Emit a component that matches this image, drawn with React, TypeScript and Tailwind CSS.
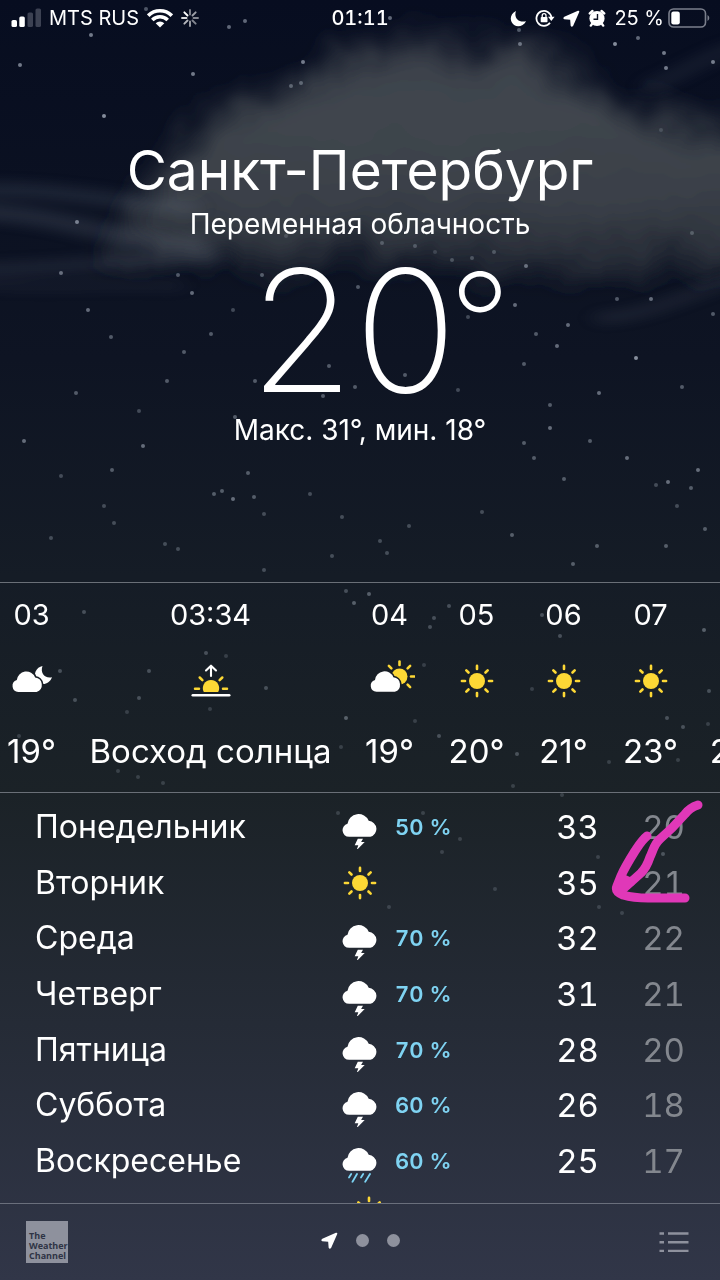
import { ReactNode } from "react";

type HourProps = {
  time: string;
  label: string;
  icon: ReactNode;
  wide?: boolean;
};

type DayProps = {
  name: string;
  icon: ReactNode;
  chance?: string;
  max: string;
  min: string;
};

const YELLOW = "#fdd835";

// x, y, opacity
const stars: [number, number, number][] = [
  [91, 35, 0.6], [20, 65, 0.6], [193, 74, 0.6], [104, 116, 0.7], [303, 62, 0.6], [301, 83, 0.4],
  [291, 86, 0.4], [245, 21, 0.5], [229, 27, 0.5], [146, 9, 0.4], [390, 18, 0.5], [519, 30, 0.4],
  [520, 44, 0.5], [615, 44, 0.7], [638, 38, 0.5], [664, 53, 0.6], [666, 68, 0.6], [713, 62, 0.6],
  [661, 130, 0.2], [692, 233, 0.3], [77, 222, 0.6], [61, 273, 0.5], [178, 275, 0.4], [192, 293, 0.5],
  [262, 275, 0.4], [88, 310, 0.5], [233, 310, 0.3], [111, 337, 0.4], [211, 334, 0.4], [184, 352, 0.4],
  [167, 381, 0.4], [76, 393, 0.4], [255, 381, 0.4], [329, 366, 0.4], [355, 387, 0.4], [323, 396, 0.4],
  [405, 375, 0.4], [458, 390, 0.3], [139, 411, 0.3], [24, 441, 0.5], [143, 446, 0.5], [235, 417, 0.4],
  [112, 470, 0.4], [61, 476, 0.3], [248, 473, 0.4], [214, 494, 0.4], [222, 491, 0.4], [233, 499, 0.5],
  [254, 497, 0.4], [310, 494, 0.3], [104, 506, 0.3], [114, 523, 0.3], [51, 538, 0.3], [165, 544, 0.3],
  [178, 549, 0.3], [264, 514, 0.3], [342, 517, 0.3], [380, 541, 0.3], [387, 553, 0.3], [332, 556, 0.3],
  [409, 526, 0.3], [482, 512, 0.3], [512, 535, 0.4], [597, 546, 0.4], [666, 546, 0.4], [573, 564, 0.4],
  [705, 529, 0.4], [677, 506, 0.3], [691, 488, 0.4], [668, 482, 0.5], [656, 485, 0.3], [698, 470, 0.5],
  [564, 479, 0.4], [534, 458, 0.4], [524, 443, 0.4], [590, 441, 0.4], [627, 458, 0.5], [550, 428, 0.5],
  [550, 405, 0.4], [599, 393, 0.5], [682, 387, 0.4], [524, 364, 0.4], [636, 358, 0.7], [557, 346, 0.5],
  [536, 334, 0.4], [568, 325, 0.5], [515, 305, 0.5], [468, 317, 0.3], [617, 299, 0.4], [651, 299, 0.5],
  [713, 314, 0.4], [526, 266, 0.5], [494, 252, 0.3], [472, 258, 0.3], [452, 260, 0.3], [435, 252, 0.2],
  [415, 246, 0.3], [382, 243, 0.3], [358, 287, 0.4], [286, 236, 0.2], [264, 570, 0.3], [84, 612, 0.3],
  [346, 591, 0.3], [354, 603, 0.4], [369, 594, 0.4], [449, 606, 0.3], [434, 618, 0.3], [430, 627, 0.3],
  [542, 615, 0.3], [560, 636, 0.3], [704, 630, 0.4], [60, 671, 0.3], [149, 671, 0.3], [206, 653, 0.3],
  [226, 656, 0.2], [266, 688, 0.3], [139, 698, 0.3], [75, 700, 0.3], [127, 712, 0.2], [210, 709, 0.2],
  [346, 718, 0.4], [424, 665, 0.2], [532, 689, 0.2], [709, 691, 0.3], [439, 736, 0.3], [415, 721, 0.2],
  [667, 718, 0.3], [683, 727, 0.3], [708, 724, 0.2], [517, 754, 0.3], [609, 762, 0.2], [678, 760, 0.2],
  [341, 747, 0.2], [118, 771, 0.2], [138, 777, 0.2], [163, 783, 0.2], [19, 736, 0.2], [513, 786, 0.2],
  [338, 813, 0.2], [423, 813, 0.2], [460, 839, 0.2], [442, 852, 0.2], [495, 889, 0.2], [389, 907, 0.2],
  [562, 795, 0.2], [598, 857, 0.2], [663, 854, 0.3], [599, 907, 0.2], [622, 913, 0.2],
];

function Sky() {
  return (
    <svg
      aria-hidden="true"
      viewBox="0 0 720 1280"
      preserveAspectRatio="xMidYMin slice"
      className="absolute inset-0 -z-10 h-full w-full"
    >
      <defs>
        <filter id="soft" x="-30%" y="-40%" width="160%" height="180%">
          <feGaussianBlur stdDeviation="15" result="blurred" />
          <feTurbulence type="fractalNoise" baseFrequency="0.016" numOctaves="3" seed="7" result="noise" />
          <feDisplacementMap in="blurred" in2="noise" scale="44" xChannelSelector="R" yChannelSelector="G" />
          <feGaussianBlur stdDeviation="3" />
        </filter>
        <filter id="wisp" x="-30%" y="-80%" width="160%" height="260%">
          <feGaussianBlur stdDeviation="10 6" />
        </filter>
        <linearGradient id="cloud" x1="0" y1="0" x2="0" y2="1">
          <stop offset="0" stopColor="#3b414b" />
          <stop offset="0.3" stopColor="#40464e" />
          <stop offset="0.7" stopColor="#3a4048" />
          <stop offset="1" stopColor="#252a35" />
        </linearGradient>
      </defs>

      <path
        d="M100 244 C140 212 150 180 185 145 C225 105 290 92 335 66 C370 44 410 42 450 50 C510 42 545 54 580 78 C605 98 612 110 650 118 C690 122 740 132 790 150 L780 244 C700 266 640 270 560 270 C480 272 430 256 360 258 C280 260 190 276 100 244 Z"
        fill="url(#cloud)"
        filter="url(#soft)"
      />
      <g filter="url(#wisp)" fill="none" stroke="#8a93a8" strokeLinecap="round">
        <path d="M-20 190 C50 188 100 200 190 208" strokeWidth="16" opacity="0.14" />
        <path d="M-20 212 C60 214 100 238 200 246" strokeWidth="18" opacity="0.17" />
        <path d="M-20 270 C60 268 110 262 220 256" strokeWidth="14" opacity="0.12" />
        <path d="M-20 284 C50 290 110 282 180 286" strokeWidth="10" opacity="0.07" />
        <path d="M600 318 C650 316 680 296 740 278" strokeWidth="10" opacity="0.13" />
        <path d="M650 86 C680 76 700 58 740 46" strokeWidth="14" opacity="0.1" />
      </g>

      {stars.map(([x, y, o]) => (
        <circle key={`${x}-${y}`} cx={x} cy={y} r="2" fill="#b9c2d0" opacity={o} />
      ))}
    </svg>
  );
}

/* Weather icons */

function CloudShape() {
  return (
    <path d="M6.7 23 A6.7 6.7 0 0 1 5 9.9 A10.6 10.6 0 0 1 25.4 7 A8.2 8.2 0 0 1 27 23 Z" />
  );
}

function SunIcon() {
  return (
    <svg viewBox="0 0 34 34" className="size-[34px]" aria-hidden="true">
      <circle cx="17" cy="17" r="8" fill={YELLOW} />
      {[0, 45, 90, 135, 180, 225, 270, 315].map((a) => (
        <path
          key={a}
          d="M17 1.9V5"
          stroke={YELLOW}
          strokeWidth="2.6"
          strokeLinecap="round"
          transform={`rotate(${a} 17 17)`}
        />
      ))}
    </svg>
  );
}

function CloudMoonIcon() {
  return (
    <svg viewBox="0 0 42 42" className="size-[42px]" aria-hidden="true">
      <path
        d="M31.5 6 C29 13 33.5 18.6 41 17.2 C39 22.5 34 25 30 23.6 C24.5 21.5 23 15.5 24.6 11.5 C26 8.5 28.5 6.6 31.5 6 Z"
        fill="#fff"
      />
      <g transform="translate(1.3 11.2) scale(0.9)" fill="#fff" stroke="#191f26" strokeWidth="3.6" style={{ paintOrder: "stroke" }}>
        <CloudShape />
      </g>
    </svg>
  );
}

function CloudSunIcon() {
  return (
    <svg viewBox="0 0 50 42" className="h-[42px] w-[50px]" aria-hidden="true">
      <circle cx="34.5" cy="16.5" r="8" fill={YELLOW} />
      {[-45, 0, 45, 90, 135].map((a) => (
        <path
          key={a}
          d="M34.5 1.5V5"
          stroke={YELLOW}
          strokeWidth="2.6"
          strokeLinecap="round"
          transform={`rotate(${a} 34.5 16.5)`}
        />
      ))}
      <g transform="translate(5.5 11) scale(0.9)" fill="#fff" stroke="#191f26" strokeWidth="3.6" style={{ paintOrder: "stroke" }}>
        <CloudShape />
      </g>
    </svg>
  );
}

function SunriseIcon() {
  return (
    <svg viewBox="0 0 40 36" className="h-9 w-10" aria-hidden="true">
      <path d="M12.8 29 A8.2 8.2 0 1 1 27.2 29 Z" fill={YELLOW} />
      <path
        d="M4 25.7H8M32 25.7H36M8.7 14.5L11.4 17.2M31.3 14.5L28.6 17.2"
        stroke={YELLOW}
        strokeWidth="2.5"
        strokeLinecap="round"
      />
      <g stroke="#fff" fill="none" strokeLinecap="round" strokeLinejoin="round">
        <path d="M1.8 32.2H38.2" strokeWidth="2.6" />
        <path d="M20 13V3M15 7.5L20 2.7L25 7.5" strokeWidth="2.1" />
      </g>
    </svg>
  );
}

function StormIcon() {
  return (
    <svg viewBox="0 0 36 44" className="h-11 w-9" aria-hidden="true">
      <g fill="#fff" transform="translate(0.3 8.8)">
        <g transform="scale(1.04 1)">
          <CloudShape />
        </g>
        <path d="M15.5 25H20.7L18.8 28.2H22.4L14.3 36.4L16 31.4H12.4Z" />
      </g>
    </svg>
  );
}

function RainIcon() {
  return (
    <svg viewBox="0 0 36 44" className="h-11 w-9" aria-hidden="true">
      <g fill="#fff" transform="translate(0.3 8.8) scale(1.04 1)">
        <CloudShape />
      </g>
      <path
        d="M9.2 35L7 38.5M15 35L10.5 42.8M21.2 35L19 38.5M28 35L23.2 42.8"
        stroke="#7cd4f4"
        strokeWidth="1.8"
        strokeLinecap="round"
      />
    </svg>
  );
}

function ArrowIcon() {
  return (
    <svg viewBox="0 0 18 18" className="size-[17px]" aria-hidden="true">
      <path
        d="M15.8 0.8 L1.4 7.2 Q-0.6 8.7 1.3 9.9 L7.6 10.4 L8.1 16.7 Q9.3 18.6 10.8 16.6 L17.2 2.2 Q17.6 0.4 15.8 0.8Z"
        fill="#fff"
      />
    </svg>
  );
}

const hours: HourProps[] = [
  { time: "03", label: "19°", icon: <CloudMoonIcon /> },
  { time: "03:34", label: "Восход солнца", icon: <SunriseIcon />, wide: true },
  { time: "04", label: "19°", icon: <CloudSunIcon /> },
  { time: "05", label: "20°", icon: <SunIcon /> },
  { time: "06", label: "21°", icon: <SunIcon /> },
  { time: "07", label: "23°", icon: <SunIcon /> },
  { time: "", label: "24°", icon: null },
];

const days: DayProps[] = [
  { name: "Понедельник", icon: <StormIcon />, chance: "50 %", max: "33", min: "20" },
  { name: "Вторник", icon: <SunIcon />, max: "35", min: "21" },
  { name: "Среда", icon: <StormIcon />, chance: "70 %", max: "32", min: "22" },
  { name: "Четверг", icon: <StormIcon />, chance: "70 %", max: "31", min: "21" },
  { name: "Пятница", icon: <StormIcon />, chance: "70 %", max: "28", min: "20" },
  { name: "Суббота", icon: <StormIcon />, chance: "60 %", max: "26", min: "18" },
  { name: "Воскресенье", icon: <RainIcon />, chance: "60 %", max: "25", min: "17" },
];

const spinner = [0.5, 0.6, 0.5, 0.5, 0.6, 0.7, 0.85, 1];

function StatusBar() {
  return (
    <div className="grid h-9 shrink-0 grid-cols-[1fr_auto_1fr] items-center px-[10px] text-xl leading-6">
      <div className="flex items-center gap-2">
        <svg viewBox="0 0 31 20" className="h-5 w-[31px]" aria-hidden="true">
          <rect x="1.5" y="12" width="5.5" height="7" rx="1.6" fill="#fff" />
          <rect x="9.3" y="8.5" width="5.5" height="10.5" rx="1.6" fill="#fff" />
          <rect x="17.5" y="4.5" width="5.5" height="14.5" rx="1.6" fill="#3c4152" />
          <rect x="25.5" y="0.5" width="5.5" height="18.5" rx="1.6" fill="#3c4152" />
        </svg>
        <span>MTS RUS</span>
        <svg viewBox="0 0 26 20" className="h-5 w-[26px]" aria-hidden="true">
          <g fill="none" stroke="#fff" strokeWidth="3.6">
            <path d="M1.2 7.6 A16.8 16.8 0 0 1 24.8 7.6" />
            <path d="M5.3 11.9 A10.9 10.9 0 0 1 20.7 11.9" />
          </g>
          <path d="M13 19.6L8.7 15.3A6.2 6.2 0 0 1 17.3 15.3Z" fill="#fff" />
        </svg>
        <svg viewBox="0 0 18 18" className="size-[18px]" aria-hidden="true">
          {spinner.map((o, i) => (
            <path
              key={i}
              d="M9 1V5.5"
              stroke="#fff"
              strokeWidth="1.9"
              strokeLinecap="round"
              opacity={o}
              transform={`rotate(${i * 45} 9 9)`}
            />
          ))}
        </svg>
      </div>

      <span className="font-medium tabular-nums">01:11</span>

      <div className="flex items-center justify-end gap-2">
        <svg viewBox="0 0 18 18" className="size-[17px]" aria-hidden="true">
          <path d="M6.3 1 C3.8 7.8 9 14 17 11.8 C14.2 17 8.5 18.7 4.3 15.8 C-1 12 -0.2 4 6.3 1Z" fill="#fff" />
        </svg>
        <svg viewBox="0 0 20 18" className="h-[18px] w-5" aria-hidden="true">
          <path d="M15 13.8 A7.5 7.5 0 1 1 16.4 8.5" fill="none" stroke="#fff" strokeWidth="1.8" />
          <path d="M13 7.8H19.6L16.3 12Z" fill="#fff" />
          <rect x="5.7" y="8" width="6.8" height="5.2" rx="0.8" fill="#fff" />
          <path d="M7.2 8.3V6.6a1.9 1.9 0 0 1 3.8 0V8.3" fill="none" stroke="#fff" strokeWidth="1.3" />
        </svg>
        <ArrowIcon />
        <svg viewBox="0 0 18 18" className="size-[18px]" aria-hidden="true">
          <circle cx="9" cy="9.5" r="7.6" fill="#fff" />
          <path
            d="M1.8 4.5L4.5 2M16.2 4.5L13.5 2M4 15L2.8 16.6M14 15L15.2 16.6"
            stroke="#fff"
            strokeWidth="2.4"
            strokeLinecap="round"
          />
          <path d="M9.5 5V10.2H5.5" fill="none" stroke="#0b1122" strokeWidth="1.4" />
        </svg>
        <span>25 %</span>
        <svg viewBox="0 0 42 20" className="-ml-1 h-5 w-[42px]" aria-hidden="true">
          <rect x="1" y="1" width="36.5" height="18" rx="4.5" fill="none" stroke="#7b7f8c" strokeWidth="1.6" />
          <rect x="3.3" y="3.6" width="8.5" height="12.8" rx="2.2" fill="#fff" />
          <path d="M39.5 7V13Q41.3 12 41.3 10T39.5 7Z" fill="#7b7f8c" />
        </svg>
      </div>
    </div>
  );
}

function Hour({ time, label, icon, wide }: HourProps) {
  return (
    <li className={`flex shrink-0 flex-col items-center ${wide ? "w-[271px]" : "w-[87px]"}`}>
      <span className="h-9 text-[29px] leading-9">{time}</span>
      <span className="mt-6 mb-[26px] flex h-12 items-center">{icon}</span>
      <span className="text-[33px] leading-10 whitespace-nowrap">{label}</span>
    </li>
  );
}

function Day({ name, icon, chance, max, min }: DayProps) {
  return (
    <tr className="grid grid-cols-[1fr_36px_1fr] items-center text-[33px] leading-10">
      <th scope="row" className="text-left text-[32px] font-normal">{name}</th>
      <td className="flex justify-center">{icon}</td>
      <td className="flex items-center justify-end gap-[42px] tabular-nums">
        <span className="mr-auto pl-[17px] text-[22px] font-semibold text-[#7fd3f2]">{chance}</span>
        <span>{max}</span>
        <span className="w-11 text-right text-[#83878e]">{min}</span>
      </td>
    </tr>
  );
}

export default function App() {
  return (
    <main className="relative isolate flex h-screen flex-col overflow-hidden bg-[linear-gradient(#070d20_0%,#0e1423_28%,#151c26_45%,#1b2227_62%,#252b36_80%,#313648_100%)] font-['Inter','Liberation_Sans',sans-serif] text-white">
      <Sky />
      <StatusBar />

      {/* Current weather */}
      <header className="flex h-[546px] shrink-0 flex-col items-center pt-[102px] text-center">
        <h1 className="text-[55px] leading-16">Санкт-Петербург</h1>
        <p className="mt-1 text-[28px] leading-9">Переменная облачность</p>
        <p className="mt-6 flex items-start pl-10 text-[170px] leading-32 font-extralight">
          20<span className="-ml-2 text-[136px] leading-[112px]">°</span>
        </p>
        <p className="mt-[18px] text-[28px] leading-9">Макс. 31°, мин. 18°</p>
      </header>

      {/* Hourly forecast */}
      <section className="h-[210px] shrink-0 overflow-hidden border-t border-[#6a6f77] pt-[14px]">
        <ul className="-ml-3 flex">
          {hours.map((hour, index) => (
            <Hour key={index} {...hour} />
          ))}
        </ul>
      </section>

      {/* Daily forecast */}
      <section className="relative min-h-0 flex-1 overflow-hidden border-t border-[#6a6f77] px-[35px] pt-[6px]">
        <table className="block w-full">
          <tbody className="grid h-[390px] auto-rows-fr">
            {days.map((day) => (
              <Day key={day.name} {...day} />
            ))}
          </tbody>
        </table>
        <div className="mt-[7px] flex justify-center pl-[18px]">
          <SunIcon />
        </div>
        {/* marker drawn over the table */}
        <svg viewBox="0 0 100 110" className="absolute top-0 right-[10px] h-[110px] w-[100px]" aria-hidden="true">
          <g fill="none" stroke="#e038b8" strokeWidth="9" strokeLinecap="round" strokeLinejoin="round">
            <path d="M88 12 C82 14 78 17 75 21 L62 35 L50 46 C44 51 43 58 40 64 C38 70 36 75 31 80 L12 97" />
            <path d="M37 43 C32 47 29 52 25 58 C20 66 14 76 11 83 L7 93 C5 98 8 100 13 102 C20 104 28 105 38 105 L75 105" />
          </g>
          <path d="M11 80L8 100L24 92L28 82L20 84Z" fill="#e038b8" />
        </svg>
      </section>

      <footer className="grid h-[77px] shrink-0 grid-cols-[1fr_auto_1fr] items-center border-t border-[#6a6f7c] px-[26px]">
        <a
          href="#weather-channel"
          className="flex size-[42px] flex-col justify-end bg-[#8e919d] pb-0.5 pl-[3px] font-['Open_Sans',sans-serif] text-[9px] leading-[10px] font-bold text-[#2f3445]"
        >
          <span>The</span>
          <span>Weather</span>
          <span>Channel</span>
        </a>
        <nav className="mb-1 flex items-center gap-[18px]">
          <button type="button" aria-label="Текущее место">
            <ArrowIcon />
          </button>
          <button type="button" aria-label="Город 2" className="size-[13px] rounded-full bg-[#8e919d]" />
          <button type="button" aria-label="Город 3" className="size-[13px] rounded-full bg-[#8e919d]" />
        </nav>
        <button type="button" aria-label="Список городов" className="mr-[5px] justify-self-end">
          <svg viewBox="0 0 30 22" className="h-[22px] w-[30px]" aria-hidden="true">
            <path
              d="M0.5 2.5H5M9 2.5H29.5M0.5 11.2H5M9 11.2H29.5M0.5 19.9H5M9 19.9H29.5"
              stroke="#8e919d"
              strokeWidth="2.4"
            />
          </svg>
        </button>
      </footer>
    </main>
  );
}
